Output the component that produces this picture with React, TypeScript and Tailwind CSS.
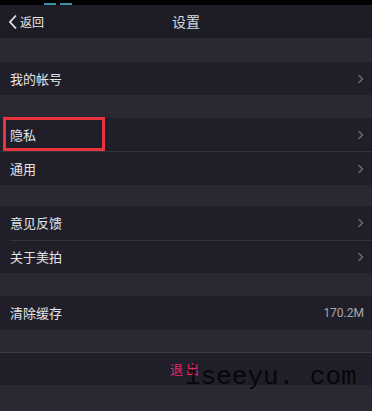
import React from 'react'

const font = { fontFamily: '"Noto Sans CJK SC", "Noto Sans", sans-serif' }

function Chevron() {
  return (
    <svg width="7" height="10" viewBox="0 0 7 10" className="shrink-0">
      <path d="M1.5 1 L5.5 5 L1.5 9" fill="none" stroke="#6d6c78" strokeWidth="1.4" />
    </svg>
  )
}

function Row({ label, h = 'h-[33px]', right }: { label: string; h?: string; right?: React.ReactNode }) {
  return (
    <div className={`${h} bg-[#201f29] flex items-center justify-between pl-[10px] pr-[8px]`}>
      <span className="text-[13px] text-[#e4e4e8]">{label}</span>
      {right ?? <Chevron />}
    </div>
  )
}

function Gap({ h }: { h: string }) {
  return <div className={`${h} bg-[#2a2933]`} />
}

export default function App() {
  return (
    <div className="w-[372px] h-[411px] overflow-hidden bg-[#2a2933] relative" style={font}>
      {/* status bar */}
      <div className="h-[5px] bg-black flex items-end gap-[4px] pl-[44px]">
        <div className="w-[12px] h-[2px] bg-[#3a8fa8]" />
        <div className="w-[12px] h-[2px] bg-[#3a8fa8]" />
      </div>

      {/* nav bar */}
      <div className="h-[33px] bg-[#1e1d26] relative flex items-center">
        <div className="flex items-center pl-[8px] gap-[2px]">
          <svg width="10" height="16" viewBox="0 0 10 16">
            <path d="M8 1.5 L2 8 L8 14.5" fill="none" stroke="#e6e6ea" strokeWidth="1.8" />
          </svg>
          <span className="text-[12px] text-[#e6e6ea]">返回</span>
        </div>
        <span className="absolute left-1/2 -translate-x-1/2 text-[14px] text-[#d8d8de]">设置</span>
      </div>

      <Gap h="h-[24px]" />
      <Row label="我的帐号" />
      <Gap h="h-[23px]" />

      <div className="relative">
        <Row label="隐私" />
        <div className="absolute left-[3px] top-[-1px] w-[102px] h-[34px] border-[3px] border-[#e8343f]" />
      </div>
      <div className="h-px bg-[#33323c]" />
      <Row label="通用" />

      <Gap h="h-[21px]" />
      <Row label="意见反馈" h="h-[34px]" />
      <div className="h-px bg-[#201f29] flex">
        <div className="w-[10px]" />
        <div className="flex-1 bg-[#35343e]" />
      </div>
      <Row label="关于美拍" h="h-[32px]" />

      <Gap h="h-[23px]" />
      <Row
        label="清除缓存"
        h="h-[34px]"
        right={<span className="text-[12px] text-[#a9a8b0]" style={{ fontFamily: '"Roboto", sans-serif' }}>170.2M</span>}
      />

      <Gap h="h-[22px]" />
      <div className="h-px bg-[#3a3944]" />
      <div className="h-[32px] bg-[#201f29] flex items-center justify-center">
        <span className="text-[13px] text-[#e0286a] tracking-[3px]">退出</span>
      </div>

      {/* watermark */}
      <div
        className="absolute left-[185px] top-[364px] text-[26px] text-black/80 leading-none"
        style={{ fontFamily: '"Liberation Mono", monospace' }}
      >
        iseeyu. com
      </div>
    </div>
  )
}
